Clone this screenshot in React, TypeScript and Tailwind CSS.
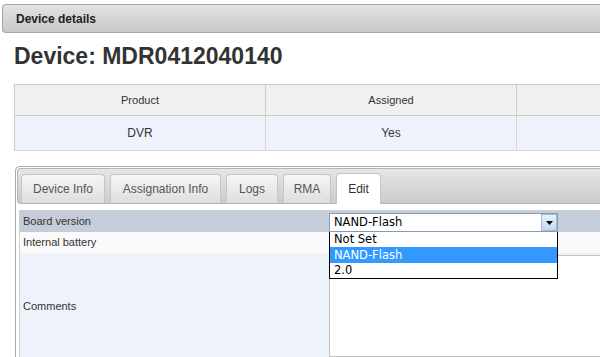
export default function App() {
  const tabs = [
    { label: "Device Info", w: "w-[84px]", active: false },
    { label: "Assignation Info", w: "w-[111px]", active: false },
    { label: "Logs", w: "w-[52px]", active: false },
    { label: "RMA", w: "w-[48px]", active: false },
    { label: "Edit", w: "w-[45px]", active: true },
  ];
  return (
    <div className="w-[600px] h-[357px] overflow-hidden bg-white text-[#333] font-['Liberation_Sans',Arial,sans-serif]">
      <div className="mt-[4px] ml-[2px] w-[640px] h-[29px] flex items-center pl-[13px] border border-r-0 border-[#a6a6a6] rounded-l-[4px] bg-linear-to-b from-[#e3e3e3] to-[#c8c8c8] text-[12px] font-bold text-[#222]">
        Device details
      </div>
      <div className="mt-[9px] ml-[14px] text-[23px] leading-[28px] font-bold text-[#333] whitespace-nowrap">
        Device: MDR0412040140
      </div>
      <div className="mt-[14px] ml-[14px] border-t border-l border-[#cccccc] grid grid-cols-[251px_251px_251px] w-max">
        {["Product", "Assigned", ""].map((h, i) => (
          <div key={i} className="h-[31px] border-r border-b border-[#cccccc] bg-[#f0f0f0] flex items-center justify-center text-[11px] text-[#333]">
            {h}
          </div>
        ))}
        {["DVR", "Yes", ""].map((h, i) => (
          <div key={i} className="h-[35px] border-r border-b border-[#d6d6d6] bg-[#eef3fb] flex items-center justify-center text-[12px] text-[#333]">
            {h}
          </div>
        ))}
      </div>
      <div className="mt-[15px] ml-[15px] w-[640px] border-t border-l border-[#aaaaaa] rounded-tl-[5px] pt-[1px] pl-[1px]">
        <div className="h-[36px] border border-r-0 border-[#b5b5b5] rounded-l-[4px] bg-linear-to-b from-[#e6e6e6] to-[#cbcbcb] flex items-end pl-[3px] gap-[5px]">
          {tabs.map((t) =>
            t.active ? (
              <div key={t.label} className={`${t.w} h-[31px] mb-[-1px] border border-b-0 border-[#c5c5c5] rounded-t-[4px] bg-white flex items-center justify-center text-[12px] text-[#333]`}>
                {t.label}
              </div>
            ) : (
              <div key={t.label} className={`${t.w} h-[29px] border border-b-0 border-[#c5c5c5] rounded-t-[4px] bg-linear-to-b from-[#f6f6f6] to-[#dedede] flex items-center justify-center text-[12px] text-[#555]`}>
                {t.label}
              </div>
            )
          )}
        </div>
        <div className="mt-[6px] ml-[2px] border-t border-l border-[#d0d0d0]">
          <div className="h-[21px] bg-[#c5ccda] flex">
            <div className="w-[309px] pl-[3px] flex items-center text-[11px] text-[#333]">Board version</div>
            <div className="relative pt-[2px]">
              <div className="w-[229px] h-[19px] border border-[#7f9db9] bg-white flex items-center font-['DejaVu_Sans',Tahoma,sans-serif] text-[11.5px] text-black">
                <span className="flex-1 pl-[4px] leading-none">NAND-Flash</span>
                <div className="w-[16px] h-[17px] border border-[#a4b9d6] bg-linear-to-b from-[#eaf1fb] to-[#c4d6ee] flex items-center justify-center">
                  <svg width="7" height="4" viewBox="0 0 7 4">
                    <polygon points="0,0 7,0 3.5,4" fill="#000" />
                  </svg>
                </div>
              </div>
              <div className="absolute z-10 left-0 top-[21px] w-[229px] border border-t-0 border-black bg-white font-['DejaVu_Sans',Tahoma,sans-serif] text-[11.5px] text-black">
                <div className="h-[15px] leading-[15px] pl-[4px]">Not Set</div>
                <div className="h-[16px] leading-[16px] pl-[4px] bg-[#3399ff] text-white">NAND-Flash</div>
                <div className="h-[15px] leading-[15px] pl-[4px]">2.0</div>
              </div>
            </div>
          </div>
          <div className="h-[21px] bg-[#fafafa] flex">
            <div className="w-[309px] pl-[3px] flex items-center text-[11px] text-[#333]">Internal battery</div>
          </div>
          <div className="h-[106px] bg-[#eef2fb] flex">
            <div className="w-[309px] pl-[3px] flex items-center text-[11px] text-[#333]">Comments</div>
            <div className="pt-[2px]">
              <div className="w-[320px] h-[102px] border border-[#c3c3c3] bg-white" />
            </div>
          </div>
        </div>
      </div>
    </div>
  );
}
